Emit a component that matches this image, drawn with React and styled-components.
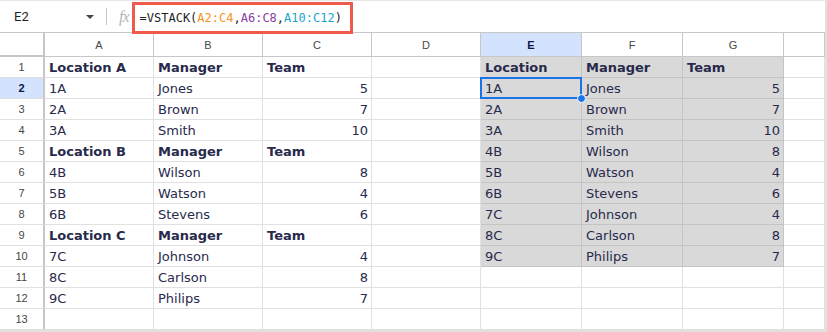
import React from 'react'
import styled, { createGlobalStyle, css } from 'styled-components'

const GlobalStyle = createGlobalStyle`
  html, body {
    margin: 0;
    padding: 0;
    background: #ffffff;
    overflow: hidden;
  }
`

const columns = ['A', 'B', 'C', 'D', 'E', 'F', 'G', '']

const rows = [
  { left: ['Location A', 'Manager', 'Team'], right: ['Location', 'Manager', 'Team'], bold: true, rightBold: true },
  { left: ['1A', 'Jones', '5'], right: ['1A', 'Jones', '5'] },
  { left: ['2A', 'Brown', '7'], right: ['2A', 'Brown', '7'] },
  { left: ['3A', 'Smith', '10'], right: ['3A', 'Smith', '10'] },
  { left: ['Location B', 'Manager', 'Team'], right: ['4B', 'Wilson', '8'], bold: true },
  { left: ['4B', 'Wilson', '8'], right: ['5B', 'Watson', '4'] },
  { left: ['5B', 'Watson', '4'], right: ['6B', 'Stevens', '6'] },
  { left: ['6B', 'Stevens', '6'], right: ['7C', 'Johnson', '4'] },
  { left: ['Location C', 'Manager', 'Team'], right: ['8C', 'Carlson', '8'], bold: true },
  { left: ['7C', 'Johnson', '4'], right: ['9C', 'Philips', '7'] },
  { left: ['8C', 'Carlson', '8'], right: null },
  { left: ['9C', 'Philips', '7'], right: null },
  { left: null, right: null },
]

const App = () => {
  return (
    <Frame>
      <GlobalStyle />
      <FormulaBar>
        <NameBox>
          <NameText>E2</NameText>
          <Caret />
        </NameBox>
        <Divider />
        <Fx>fx</Fx>
        <Formula>
          =VSTACK(<Ref $color="#f5931e">A2:C4</Ref>,<Ref $color="#8a3d9f">A6:C8</Ref>,
          <Ref $color="#1aa6c9">A10:C12</Ref>)
        </Formula>
      </FormulaBar>

      <Sheet>
        <Corner />
        {columns.map((c, i) => (
          <ColHeader key={i} $active={c === 'E'}>
            {c}
          </ColHeader>
        ))}

        {rows.map((row, r) => {
          const num = r + 1
          const inRange = num <= 10
          return (
            <React.Fragment key={num}>
              <RowHeader $active={num === 2}>{num}</RowHeader>
              {[0, 1, 2].map((c) => (
                <Cell key={`l${c}`} $bold={row.bold} $right={c === 2 && !row.bold}>
                  {row.left ? row.left[c] : ''}
                </Cell>
              ))}
              <Cell />
              {[0, 1, 2].map((c) => (
                <Cell
                  key={`r${c}`}
                  $fill={inRange}
                  $bold={row.rightBold}
                  $right={c === 2 && !row.rightBold}
                >
                  {row.right ? row.right[c] : ''}
                  {num === 2 && c === 0 && (
                    <>
                      <Selection />
                      <Handle />
                    </>
                  )}
                </Cell>
              ))}
              <Cell />
            </React.Fragment>
          )
        })}
      </Sheet>
    </Frame>
  )
}

const Frame = styled.div`
  width: 827px;
  height: 332px;
  box-sizing: border-box;
  border-top: 1px solid #e6e6e6;
  border-right: 2px solid #e3e0e0;
  border-bottom: 2px solid #e3e0e0;
  overflow: hidden;
  background: #ffffff;
`

const FormulaBar = styled.div`
  display: flex;
  align-items: center;
  height: 31px;
  border-bottom: 1px solid #c7c7c7;
  position: relative;
`

const NameBox = styled.div`
  display: flex;
  align-items: center;
  justify-content: space-between;
  width: 80px;
  padding: 0 12px 0 14px;
`

const NameText = styled.span`
  font-family: Roboto, 'Liberation Sans', sans-serif;
  font-size: 13px;
  color: #1f1f1f;
`

const Caret = styled.span`
  width: 0;
  height: 0;
  border-left: 4px solid transparent;
  border-right: 4px solid transparent;
  border-top: 4px solid #444746;
`

const Divider = styled.span`
  width: 1px;
  height: 17px;
  background: #c7c7c7;
`

const Fx = styled.span`
  font-family: 'Liberation Serif', serif;
  font-style: italic;
  font-size: 16px;
  color: #b4b4b4;
  margin: 0 3px 0 12px;
  letter-spacing: -1px;
`

const Formula = styled.div`
  box-sizing: border-box;
  align-self: flex-start;
  margin-top: 1px;
  height: 32px;
  width: 221px;
  border: 3px solid #ef5a4a;
  padding: 0 0 0 5px;
  display: flex;
  align-items: center;
  font-family: 'DejaVu Sans Mono', 'Liberation Mono', monospace;
  font-size: 12px;
  color: #1f1f1f;
  white-space: pre;
  position: relative;
  z-index: 2;
`

const Ref = styled.span`
  color: ${({ $color }) => $color};
`

const Sheet = styled.div`
  display: grid;
  grid-template-columns: 45px repeat(4, 109px) repeat(3, 101px) 1fr;
  grid-template-rows: 24px repeat(13, 21px);
`

const headerBase = css`
  box-sizing: border-box;
  display: flex;
  align-items: center;
  justify-content: center;
  font-family: 'Liberation Sans', Arial, sans-serif;
  font-size: 11px;
  color: #444746;
`

const Corner = styled.div`
  box-sizing: border-box;
  border-right: 2px solid #c7c7c7;
  border-bottom: 2px solid #c7c7c7;
`

const ColHeader = styled.div`
  ${headerBase}
  border-right: 1px solid #c7c7c7;
  border-bottom: 1px solid #c7c7c7;
  background: ${({ $active }) => ($active ? '#d3e3fd' : '#ffffff')};
  color: ${({ $active }) => ($active ? '#0b1a45' : '#444746')};
  font-weight: ${({ $active }) => ($active ? 700 : 400)};
`

const RowHeader = styled.div`
  ${headerBase}
  border-right: 2px solid #c7c7c7;
  border-bottom: 1px solid #e1e1e1;
  background: ${({ $active }) => ($active ? '#d3e3fd' : '#ffffff')};
  color: ${({ $active }) => ($active ? '#0b1a45' : '#444746')};
  font-weight: ${({ $active }) => ($active ? 700 : 400)};
`

const Cell = styled.div`
  position: relative;
  box-sizing: border-box;
  display: flex;
  align-items: center;
  justify-content: ${({ $right }) => ($right ? 'flex-end' : 'flex-start')};
  padding: 1px 3px 0 4px;
  border-right: 1px solid ${({ $fill }) => ($fill ? '#c4c4c4' : '#e1e1e1')};
  border-bottom: 1px solid ${({ $fill }) => ($fill ? '#c4c4c4' : '#e1e1e1')};
  background: ${({ $fill }) => ($fill ? '#d9d9d9' : '#ffffff')};
  font-family: 'DejaVu Sans', Verdana, sans-serif;
  font-size: 13px;
  font-weight: ${({ $bold }) => ($bold ? 700 : 400)};
  color: #282a4c;
  white-space: nowrap;
`

const Selection = styled.span`
  position: absolute;
  left: -1px;
  top: -1px;
  right: -1px;
  bottom: -1px;
  border: 2px solid #1a73e8;
  pointer-events: none;
`

const Handle = styled.span`
  position: absolute;
  right: -5px;
  bottom: -5px;
  width: 7px;
  height: 7px;
  border-radius: 50%;
  background: #1a73e8;
  border: 1px solid #ffffff;
  z-index: 3;
`

export default App
